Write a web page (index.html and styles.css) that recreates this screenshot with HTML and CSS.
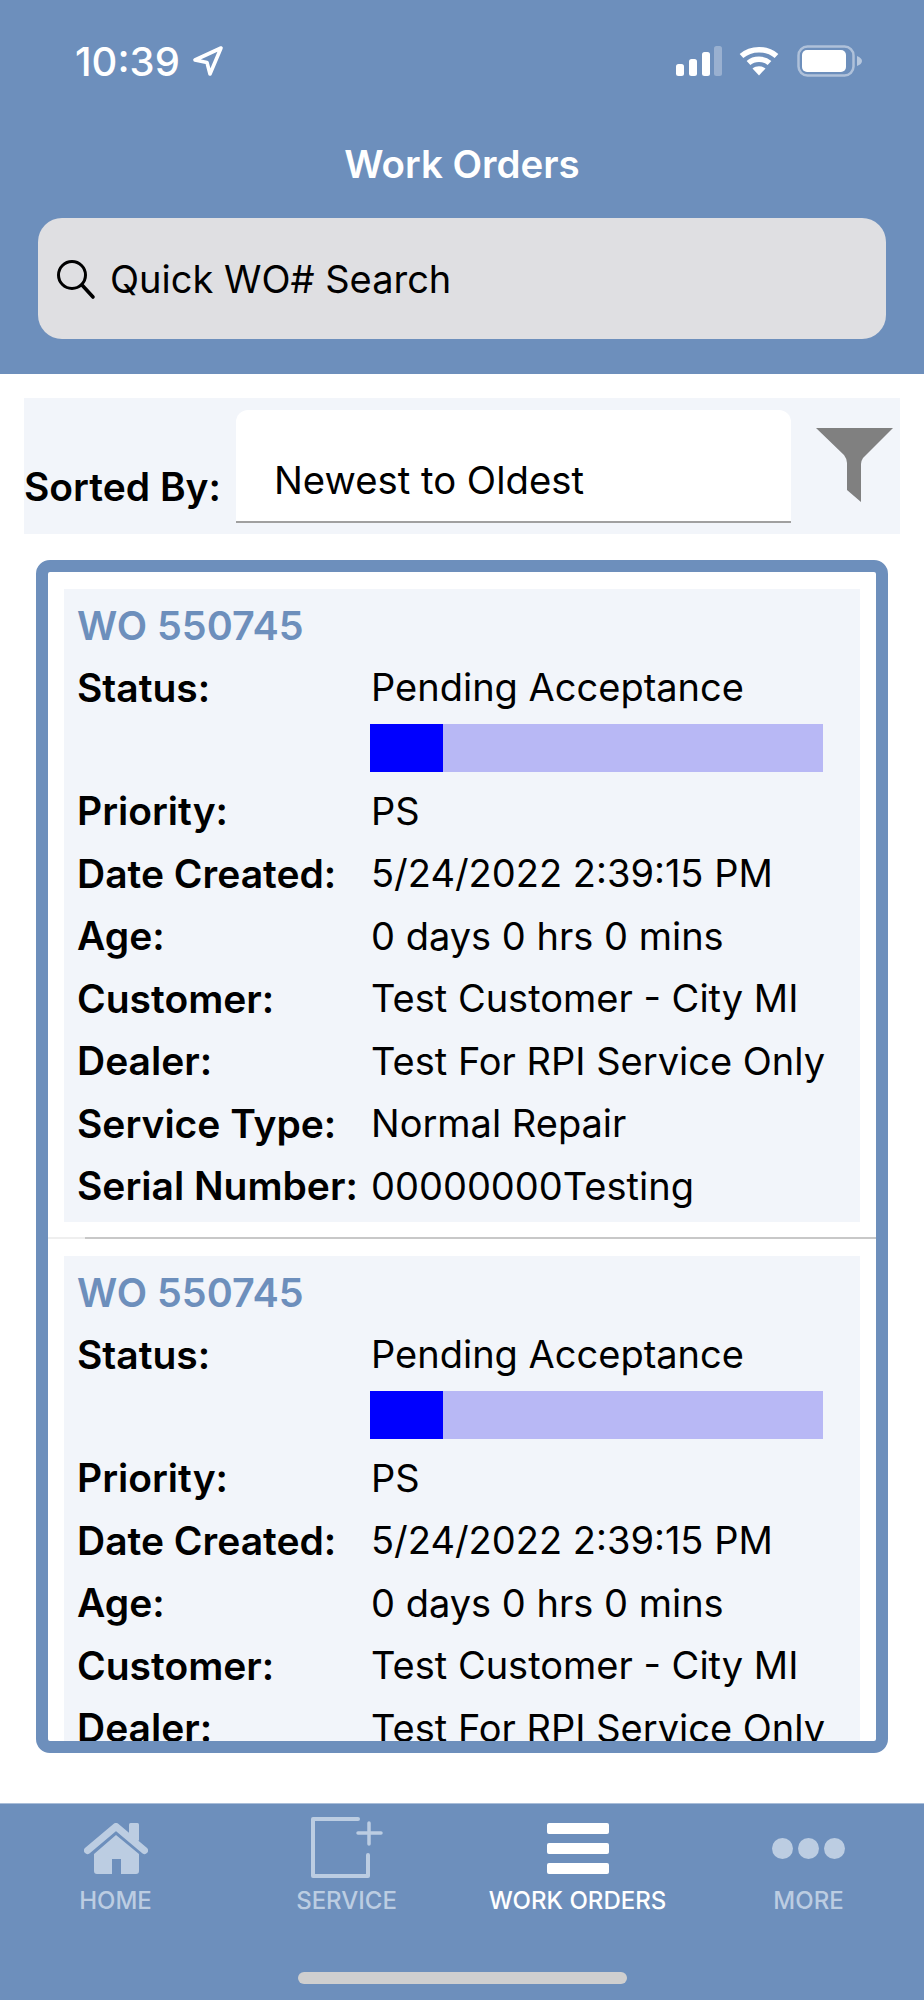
FILE: index.html
```html
<!DOCTYPE html>
<html lang="en">
<head>
  <meta charset="UTF-8">
  <meta name="viewport" content="width=device-width, initial-scale=1.0">
  <title>Work Orders</title>
  <link rel="stylesheet" href="styles.css">
</head>
<body>

  <div class="page">

    <!-- Blue header with status bar, title and search -->
    <div class="header">
      <div class="statusbar">
        <div class="status-time">
          <span>10:39</span>
          <svg class="status-arrow" width="32" height="32" viewBox="0 0 32 32">
            <path d="M29 3 L3 15 L15 17.500 L18 29 Z" fill="none" stroke="#fff" stroke-width="3.600" stroke-linejoin="round"/>
          </svg>
        </div>
        <div class="status-icons">
          <svg width="46" height="30" viewBox="0 0 46 30">
            <rect x="0" y="18" width="8" height="12" rx="2.500" fill="#fff"/>
            <rect x="13" y="13" width="8" height="17" rx="2.500" fill="#fff"/>
            <rect x="26" y="6" width="8" height="24" rx="2.500" fill="#fff"/>
            <rect x="38" y="0" width="8" height="30" rx="2.500" fill="#fff" opacity="0.300"/>
          </svg>
          <svg class="status-wifi" width="40" height="30" viewBox="0 0 40 30">
            <path d="M2.500 10 C12 1.500 28 1.500 37.500 10" fill="none" stroke="#fff" stroke-width="5.500"/>
            <path d="M9.500 17 C15 12 25 12 30.500 17" fill="none" stroke="#fff" stroke-width="5.500"/>
            <path d="M13.500 22.500 C17 19.500 23 19.500 26.500 22.500 L20 29.500 Z" fill="#fff"/>
          </svg>
          <svg class="status-battery" width="65" height="32" viewBox="0 0 65 32">
            <rect x="1.500" y="1.500" width="55" height="29" rx="9" fill="none" stroke="#fff" stroke-opacity="0.450" stroke-width="2.500"/>
            <rect x="5" y="5" width="44" height="22" rx="5" fill="#fff"/>
            <path d="M60 11 C63 12 65 14 65 16 C65 18 63 20 60 21 Z" fill="#fff" fill-opacity="0.500"/>
          </svg>
        </div>
      </div>

      <div class="header-title">Work Orders</div>

      <div class="search-box">
        <svg width="42" height="42" viewBox="0 0 42 42">
          <circle cx="17" cy="17" r="13.500" fill="none" stroke="#000" stroke-width="3"/>
          <path d="M27 27 L38 39" fill="none" stroke="#000" stroke-width="3.600" stroke-linecap="round"/>
        </svg>
        <span>Quick WO# Search</span>
      </div>
    </div>

    <!-- Sort row -->
    <div class="sort-bar">
      <div class="sort-label">Sorted By:</div>
      <div class="sort-select">Newest to Oldest</div>
      <svg class="sort-filter" width="77" height="74" viewBox="0 0 77 74">
        <path d="M0 0 H77 L47 30 Q45 33 45 36 V74 L31 62 V35 Q31 31 28 27 Z" fill="#808080"/>
      </svg>
    </div>

    <!-- Work order list, second cell runs off the bottom -->
    <div class="wo-list">

      <div class="wo-cell">
        <div class="wo-card">
          <div class="wo-title">WO 550745</div>
          <div class="wo-row"><div class="wo-label">Status:</div><div class="wo-value">Pending Acceptance</div></div>
          <div class="wo-progress"><div class="wo-progress-fill" style="width: 16.200%"></div></div>
          <div class="wo-row"><div class="wo-label">Priority:</div><div class="wo-value">PS</div></div>
          <div class="wo-row"><div class="wo-label">Date Created:</div><div class="wo-value">5/24/2022 2:39:15 PM</div></div>
          <div class="wo-row"><div class="wo-label">Age:</div><div class="wo-value">0 days 0 hrs 0 mins</div></div>
          <div class="wo-row"><div class="wo-label">Customer:</div><div class="wo-value">Test Customer - City MI</div></div>
          <div class="wo-row"><div class="wo-label">Dealer:</div><div class="wo-value">Test For RPI Service Only</div></div>
          <div class="wo-row"><div class="wo-label">Service Type:</div><div class="wo-value">Normal Repair</div></div>
          <div class="wo-row"><div class="wo-label">Serial Number:</div><div class="wo-value">00000000Testing</div></div>
        </div>
      </div>

      <div class="wo-cell">
        <div class="wo-card">
          <div class="wo-title">WO 550745</div>
          <div class="wo-row"><div class="wo-label">Status:</div><div class="wo-value">Pending Acceptance</div></div>
          <div class="wo-progress"><div class="wo-progress-fill" style="width: 16.200%"></div></div>
          <div class="wo-row"><div class="wo-label">Priority:</div><div class="wo-value">PS</div></div>
          <div class="wo-row"><div class="wo-label">Date Created:</div><div class="wo-value">5/24/2022 2:39:15 PM</div></div>
          <div class="wo-row"><div class="wo-label">Age:</div><div class="wo-value">0 days 0 hrs 0 mins</div></div>
          <div class="wo-row"><div class="wo-label">Customer:</div><div class="wo-value">Test Customer - City MI</div></div>
          <div class="wo-row"><div class="wo-label">Dealer:</div><div class="wo-value">Test For RPI Service Only</div></div>
          <div class="wo-row"><div class="wo-label">Service Type:</div><div class="wo-value">Normal Repair</div></div>
          <div class="wo-row"><div class="wo-label">Serial Number:</div><div class="wo-value">00000000Testing</div></div>
        </div>
      </div>

    </div>

    <!-- Bottom tabs -->
    <div class="tabbar">
      <div class="tabs">
        <div class="tab">
          <div class="tab-icon">
            <svg width="64" height="51" viewBox="0 0 64 51">
              <rect x="45" y="0" width="10" height="18" rx="1.500" fill="#bccde2"/>
              <path d="M3.500 27.500 L32 3.500 L60.500 27.500" fill="none" stroke="#bccde2" stroke-width="7" stroke-linecap="round" stroke-linejoin="round"/>
              <path d="M10 31 L32 12 L55 31 V48 Q55 51 52 51 H37 V36 H28 V51 H13 Q10 51 10 48 Z" fill="#bccde2"/>
            </svg>
          </div>
          <div class="tab-label">HOME</div>
        </div>
        <div class="tab">
          <div class="tab-icon">
            <svg width="72" height="62" viewBox="0 0 72 62">
              <path d="M47 2 H2 V59 H57 V38" fill="none" stroke="#bccde2" stroke-width="4" stroke-linecap="round" stroke-linejoin="round"/>
              <path d="M58 6 V27 M47 16 H70" fill="none" stroke="#bccde2" stroke-width="3.500" stroke-linecap="round"/>
            </svg>
          </div>
          <div class="tab-label">SERVICE</div>
        </div>
        <div class="tab tab-active">
          <div class="tab-icon">
            <svg width="62" height="51" viewBox="0 0 62 51">
              <rect x="0" y="0" width="62" height="11" rx="2" fill="#fff"/>
              <rect x="0" y="20" width="62" height="11" rx="2" fill="#fff"/>
              <rect x="0" y="40" width="62" height="11" rx="2" fill="#fff"/>
            </svg>
          </div>
          <div class="tab-label">WORK ORDERS</div>
        </div>
        <div class="tab">
          <div class="tab-icon">
            <svg width="73" height="21" viewBox="0 0 73 21">
              <circle cx="10.500" cy="10.500" r="10.500" fill="#bccde2"/>
              <circle cx="36.500" cy="10.500" r="10.500" fill="#bccde2"/>
              <circle cx="62.500" cy="10.500" r="10.500" fill="#bccde2"/>
            </svg>
          </div>
          <div class="tab-label">MORE</div>
        </div>
      </div>
      <div class="home-indicator"></div>
    </div>

  </div>

</body>
</html>
```

FILE: styles.css
```css
body {
  margin: 0;
  font-family: Inter, "Liberation Sans", sans-serif;
  background: #fff;
  color: #000;
}

.page {
  display: flex;
  flex-direction: column;
  height: 2000px;
}

/* Header */
.header {
  height: 374px;
  box-sizing: border-box;
  background: #6d8fbc;
  padding-top: 44px;
  flex-shrink: 0;
}

.statusbar {
  display: flex;
  justify-content: space-between;
  align-items: center;
  height: 34px;
  padding: 0 62px 0 75px;
}

.status-time {
  display: flex;
  align-items: center;
  gap: 12px;
  color: #fff;
  font-size: 40px;
  font-weight: 500;
}

.status-icons {
  display: flex;
  align-items: center;
}

.status-wifi {
  margin-left: 17px;
}

.status-battery {
  margin-left: 18px;
}

.header-title {
  margin-top: 64px;
  text-align: center;
  color: #fff;
  font-size: 38.500px;
  font-weight: 600;
  line-height: 44px;
}

.search-box {
  display: flex;
  align-items: center;
  gap: 13px;
  height: 121px;
  margin: 32px 38px 0;
  padding-left: 17px;
  box-sizing: border-box;
  background: #dfdfe2;
  border-radius: 24px;
  font-size: 38px;
}

/* Sort row */
.sort-bar {
  display: flex;
  align-items: flex-start;
  height: 136px;
  margin: 24px 24px 0;
  background: #f2f5fa;
}

.sort-label {
  width: 212px;
  margin-top: 67px;
  font-size: 39px;
  font-weight: 600;
  line-height: 44px;
  white-space: nowrap;
}

.sort-select {
  width: 555px;
  height: 113px;
  margin-top: 12px;
  padding: 48px 0 0 38px;
  box-sizing: border-box;
  background: #fff;
  border-bottom: 2px solid #a0a0a0;
  border-radius: 12px 12px 0 0;
  font-size: 38.300px;
  line-height: 44px;
}

.sort-filter {
  margin: 30px 0 0 25px;
}

/* Work order list */
.wo-list {
  flex-shrink: 0;
  box-sizing: border-box;
  height: 1193px;
  margin: 26px 36px 0;
  background: #fff;
  border: 12px solid #6d8fbc;
  border-radius: 14px;
  overflow: hidden;
}

.wo-cell {
  height: 667px;
  box-sizing: border-box;
  padding: 17px 16px 0;
  /* separator fades out under the left edge of the cell */
  background: linear-gradient(90deg, #efefef 37px, #c8c8c8 37px) left bottom / 100% 2px no-repeat;
}

.wo-card {
  height: 633px;
  box-sizing: border-box;
  padding: 9px 13px 0;
  background: #f2f5fa;
}

.wo-title {
  color: #6d8fbc;
  font-size: 39.500px;
  font-weight: 600;
  line-height: 56px;
  margin-bottom: 2px;
}

.wo-row {
  display: flex;
  height: 62.500px;
  align-items: center;
  font-size: 38px;
}

.wo-label {
  width: 294px;
  flex-shrink: 0;
  font-size: 39px;
  font-weight: 600;
  white-space: nowrap;
}

.wo-value {
  white-space: nowrap;
}

.wo-progress {
  width: 453px;
  height: 48px;
  margin: 5px 0 8px 293px;
  background: #b8b8f5;
}

.wo-progress-fill {
  height: 100%;
  background: #0000ff;
}

/* Tabs */
.tabbar {
  margin-top: auto;
  height: 197px;
  box-sizing: border-box;
  background: #6d8fbc;
  border-top: 1px solid #a9bdd8;
}

.tabs {
  display: grid;
  grid-template-columns: repeat(4, 1fr);
}

.tab {
  display: flex;
  flex-direction: column;
  align-items: center;
  color: #bccde2;
}

.tab-active {
  color: #fff;
}

.tab-icon {
  display: flex;
  align-items: center;
  justify-content: center;
  height: 62px;
  margin-top: 13px;
}

.tab-label {
  margin-top: 7px;
  font-size: 24px;
  font-weight: 500;
  line-height: 30px;
}

.home-indicator {
  width: 329px;
  height: 12px;
  margin: 56px auto 0;
  background: #cfcfcf;
  border-radius: 6px;
}
```
